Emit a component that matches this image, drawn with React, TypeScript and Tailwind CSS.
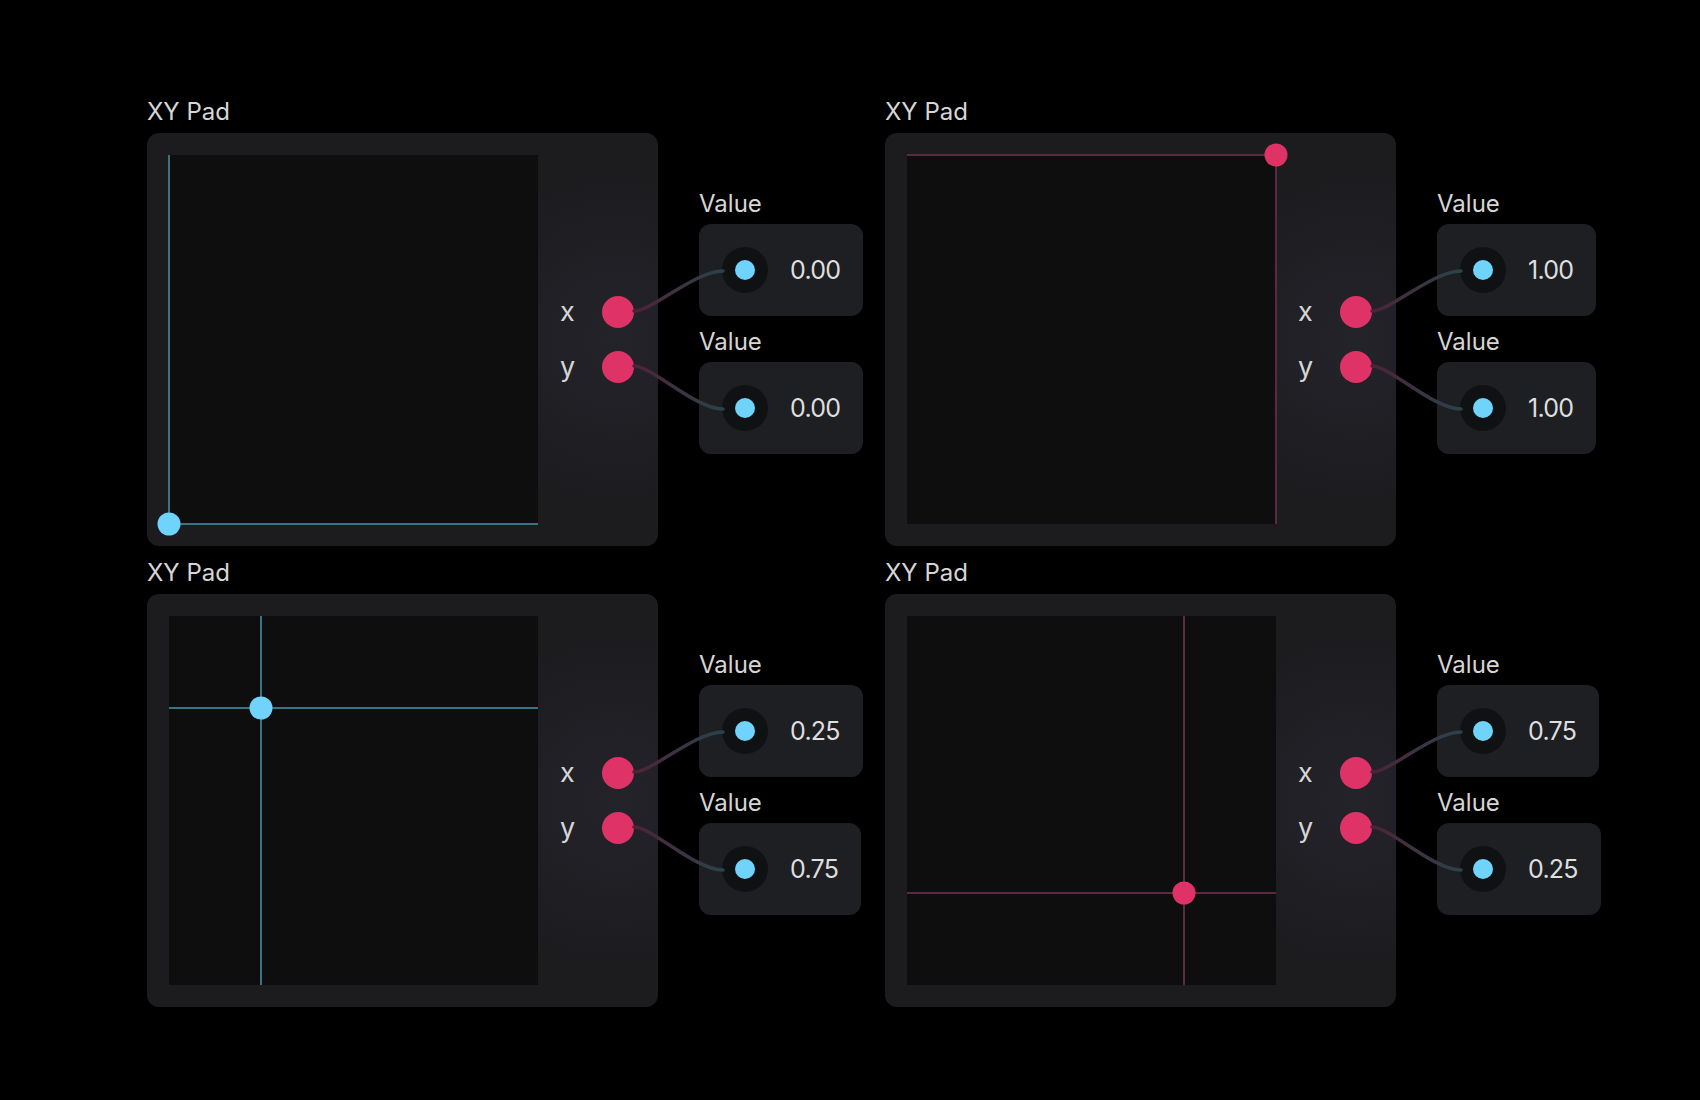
import React from "react";

type Pad = { x: number; y: number; color: "cyan" | "pink" };

const pads: Pad[] = [
  { x: 0, y: 0, color: "cyan" },
  { x: 1, y: 1, color: "pink" },
  { x: 0.25, y: 0.75, color: "cyan" },
  { x: 0.75, y: 0.25, color: "pink" },
];

function XYPadArea({ x, y, color }: Pad) {
  const line = color === "cyan" ? "bg-[#3a7383]" : "bg-[#5c2a40]";
  const dot = color === "cyan" ? "bg-[#6fd3fb]" : "bg-[#df3368]";
  return (
    <div className="relative w-[369px] h-[369px] bg-[#0e0e0e] shrink-0">
      <div
        className={`absolute top-0 bottom-0 w-[2px] -translate-x-1/2 ${line}`}
        style={{ left: `${x * 100}%` }}
      />
      <div
        className={`absolute left-0 right-0 h-[2px] -translate-y-1/2 ${line}`}
        style={{ top: `${(1 - y) * 100}%` }}
      />
      <div
        className={`absolute w-[23px] h-[23px] rounded-full -translate-x-1/2 -translate-y-1/2 ${dot}`}
        style={{ left: `${x * 100}%`, top: `${(1 - y) * 100}%` }}
      />
    </div>
  );
}

function ValueNode({ value }: { value: string }) {
  return (
    <div className="flex flex-col">
      <div className="text-[24px] leading-[30px] text-[#d6d6d6] mb-[5px]">Value</div>
      <div className="flex items-center gap-[22px] p-[23px] rounded-[12px] bg-[#1e1f22] w-fit">
        <div className="w-[46px] h-[46px] rounded-full bg-[#101113] flex items-center justify-center shrink-0">
          <div className="w-[20px] h-[20px] rounded-full bg-[#6fd3fb]" />
        </div>
        <div className="text-[25px] leading-[30px] tracking-[-0.03em] text-[#dedede]">{value}</div>
      </div>
    </div>
  );
}

function Wire({ id, y1, y2 }: { id: string; y1: number; y2: number }) {
  const x1 = 487;
  const x2 = 576;
  const d = `M ${x1} ${y1} C ${x1 + 18} ${y1}, ${x2 - 28} ${y2}, ${x2} ${y2}`;
  return (
    <>
      <defs>
        <linearGradient id={id} gradientUnits="userSpaceOnUse" x1={x1} y1={0} x2={x2} y2={0}>
          <stop offset="0%" stopColor="#4e2337" />
          <stop offset="100%" stopColor="#2a434b" />
        </linearGradient>
      </defs>
      <path d={d} stroke={`url(#${id})`} strokeWidth={3.5} fill="none" strokeLinecap="round" />
    </>
  );
}

function Group({ pad, values, idx }: { pad: Pad; values: [string, string]; idx: number }) {
  return (
    <div className="flex flex-col">
      <div className="text-[24px] leading-[30px] text-[#d6d6d6] mb-[6px]">XY Pad</div>
      <div className="relative flex items-start">
        <div className="w-[511px] h-[413px] rounded-[12px] p-[22px] flex items-center bg-[radial-gradient(circle_at_92%_50%,#24232a_0%,#1c1c1f_170px)] shrink-0">
          <XYPadArea {...pad} />
          <div className="ml-[22px] grid grid-cols-[14px_32px] gap-x-[28px] gap-y-[23px] items-center">
            <div className="text-[27px] leading-[32px] text-[#d6d6d6] text-center">x</div>
            <div className="w-[32px] h-[32px] rounded-full bg-[#df3368]" />
            <div className="text-[27px] leading-[32px] text-[#d6d6d6] text-center">y</div>
            <div className="w-[32px] h-[32px] rounded-full bg-[#df3368]" />
          </div>
        </div>
        <div className="ml-[41px] mt-[56px] flex flex-col gap-[11px]">
          <ValueNode value={values[0]} />
          <ValueNode value={values[1]} />
        </div>
        <svg className="absolute left-0 top-0 pointer-events-none" width={700} height={413}>
          <Wire id={`w${idx}a`} y1={178} y2={138} />
          <Wire id={`w${idx}b`} y1={233} y2={276} />
        </svg>
      </div>
    </div>
  );
}

export default function App() {
  const data: [string, string][] = [
    ["0.00", "0.00"],
    ["1.00", "1.00"],
    ["0.25", "0.75"],
    ["0.75", "0.25"],
  ];
  return (
    <div
      className="w-full h-[1100px] bg-black pl-[147px] pt-[97px]"
      style={{ fontFamily: "Inter, 'Noto Sans', sans-serif" }}
    >
      <div className="grid grid-cols-[738px_738px] gap-y-[12px]">
        {pads.map((p, i) => (
          <Group key={i} pad={p} values={data[i]} idx={i} />
        ))}
      </div>
    </div>
  );
}
